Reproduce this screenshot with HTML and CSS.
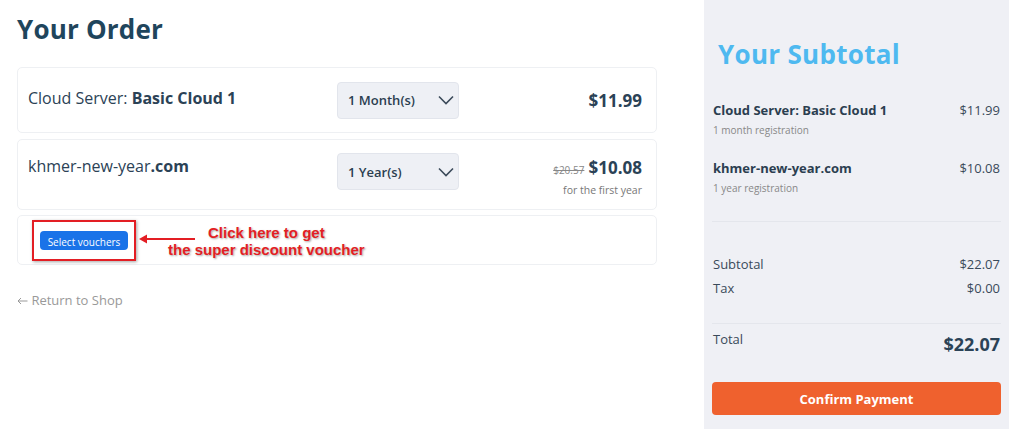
FILE: index.html
```html
<!DOCTYPE html>
<html lang="en">
<head>
    <meta charset="UTF-8">
    <meta name="viewport" content="width=device-width, initial-scale=1.0">
    <title>Your Order</title>
    <link rel="stylesheet" href="styles.css">
</head>
<body>
    <div class="page">
        <div class="order">
            <h1>Your Order</h1>

            <div class="card item">
                <div class="name">Cloud Server: <b>Basic Cloud 1</b></div>
                <div class="select">1 Month(s)
                    <svg width="16" height="10" viewBox="0 0 16 10"><path d="M1 1.5 L8 8.5 L15 1.5" fill="none" stroke="#3b4a5a" stroke-width="1.6"/></svg>
                </div>
                <div class="price"><span class="now">$11.99</span></div>
            </div>

            <div class="card item item-tall">
                <div class="name">khmer-new-year<b>.com</b></div>
                <div class="select">1 Year(s)
                    <svg width="16" height="10" viewBox="0 0 16 10"><path d="M1 1.5 L8 8.5 L15 1.5" fill="none" stroke="#3b4a5a" stroke-width="1.6"/></svg>
                </div>
                <div class="price">
                    <div><s class="old">$20.57</s> <span class="now">$10.08</span></div>
                    <div class="note">for the first year</div>
                </div>
            </div>

            <div class="card voucher">
                <div class="highlight">
                    <button class="btn-voucher">Select vouchers</button>
                </div>
                <svg class="arrow" width="58" height="12" viewBox="0 0 58 12"><path d="M57 6 H6" stroke="#e31e24" stroke-width="2"/><path d="M1 6 L9 1.5 L9 10.5 Z" fill="#e31e24"/></svg>
                <div class="hint">Click here to get<br>the super discount voucher</div>
            </div>

            <a class="back" href="#"><svg width="11" height="8" viewBox="0 0 11 8"><path d="M10.5 4 H1 M4 1 L1 4 L4 7" fill="none" stroke="#999" stroke-width="1"/></svg> Return to Shop</a>
        </div>

        <aside class="summary">
            <h2>Your Subtotal</h2>
            <div class="lines">
                <div class="line">
                    <div>
                        <div class="line-name">Cloud Server: Basic Cloud 1</div>
                        <div class="line-sub">1 month registration</div>
                    </div>
                    <div class="line-price">$11.99</div>
                </div>
                <div class="line">
                    <div>
                        <div class="line-name">khmer-new-year.com</div>
                        <div class="line-sub">1 year registration</div>
                    </div>
                    <div class="line-price">$10.08</div>
                </div>
            </div>
            <div class="totals">
                <div class="row"><span>Subtotal</span><span>$22.07</span></div>
                <div class="row"><span>Tax</span><span>$0.00</span></div>
            </div>
            <div class="grand">
                <span>Total</span><span class="grand-price">$22.07</span>
            </div>
            <button class="btn-confirm">Confirm Payment</button>
        </aside>
    </div>
</body>
</html>
```

FILE: styles.css
```css
body {
    margin: 0;
    font-family: "Open Sans", "Noto Sans", sans-serif;
    color: #2b4256;
    background: #fff;
}
.page {
    display: flex;
    height: 429px;
}
.order {
    width: 640px;
    padding: 0 0 0 17px;
}
h1 {
    margin: 11px 0 20px;
    font-size: 26px;
    font-weight: 700;
    color: #1f455c;
    letter-spacing: 0.2px;
}
.card {
    border: 1px solid #eef0f3;
    border-radius: 5px;
    margin-bottom: 5px;
}
.item {
    display: flex;
    align-items: center;
    height: 64px;
    padding: 0 14px 0 10px;
}
.item-tall {
    height: 69px;
    margin-top: 6px;
    align-items: flex-start;
}
.item-tall .name {
    margin-top: 15px;
}
.item-tall .select {
    margin-top: 13px;
}
.item-tall .price {
    margin-top: 16px;
}
.name {
    width: 309px;
    font-size: 16px;
    color: #2b4256;
    margin-top: -4px;
}
.name b {
    font-weight: 700;
}
.select {
    width: 122px;
    height: 37px;
    box-sizing: border-box;
    background: #eef0f5;
    border: 1px solid #e2e5ec;
    border-radius: 4px;
    display: flex;
    align-items: center;
    justify-content: space-between;
    padding: 0 4px 0 10px;
    font-size: 13px;
    font-weight: 600;
    color: #2b3e50;
}
.price {
    flex: 1;
    text-align: right;
}
.now {
    font-size: 17px;
    font-weight: 700;
    color: #2b4256;
}
.old {
    font-size: 10px;
    color: #888;
}
.note {
    font-size: 10.5px;
    color: #777;
    margin-top: 4px;
}
.voucher {
    display: flex;
    align-items: center;
    height: 48px;
    padding-left: 14px;
}
.highlight {
    border: 2px solid #e31e24;
    padding: 7px 6px 8px 6px;
    box-shadow: 1px 1px 3px rgba(0, 0, 0, 0.35);
}
.btn-voucher {
    background: #1a73e8;
    color: #fff;
    border: none;
    border-radius: 4px;
    font-family: inherit;
    font-size: 10px;
    padding: 4px 6px;
    width: 88px;
    height: 19px;
    cursor: pointer;
}
.arrow {
    margin-left: 2px;
    margin-top: -2px;
}
.hint {
    color: #e31e24;
    font-family: "Liberation Sans", Arial, sans-serif;
    font-size: 15px;
    font-weight: 700;
    text-align: center;
    line-height: 17px;
    text-shadow: 1px 1px 2px rgba(0, 0, 0, 0.35);
    margin-left: -28px;
    margin-top: 2px;
}
.back {
    display: block;
    margin-top: 26px;
    font-size: 13px;
    color: #999;
    text-decoration: none;
}
.summary {
    margin-left: 47px;
    width: 305px;
    background: #eff0f5;
    padding: 0 8px;
    box-sizing: border-box;
}
h2 {
    margin: 36px 0 29px 6px;
    font-size: 26px;
    font-weight: 700;
    color: #4eb9f0;
    letter-spacing: 0.3px;
}
.lines {
    border-bottom: 1px solid #e4e6ec;
    padding-bottom: 26px;
}
.line {
    display: flex;
    justify-content: space-between;
    padding: 0 1px;
    margin-bottom: 22px;
}
.line:last-child {
    margin-bottom: 0;
}
.line-name {
    font-size: 13px;
    font-weight: 700;
    color: #2b3e50;
}
.line-sub {
    font-size: 10px;
    color: #888;
    margin-top: 4px;
}
.line-price {
    font-size: 13px;
    color: #3a4a5a;
}
.totals {
    padding: 33px 1px 20px;
    border-bottom: 1px solid #e4e6ec;
}
.row {
    display: flex;
    justify-content: space-between;
    font-size: 13px;
    color: #3a4a5a;
    margin-bottom: 6px;
}
.grand {
    display: flex;
    justify-content: space-between;
    align-items: flex-start;
    padding: 6px 1px 0;
    font-size: 13px;
    color: #3a4a5a;
}
.grand-price {
    font-size: 18px;
    font-weight: 700;
    color: #2b4256;
    margin-top: 2px;
}
.btn-confirm {
    display: block;
    width: 100%;
    height: 33px;
    margin-top: 26px;
    background: #ef612e;
    color: #fff;
    border: none;
    border-radius: 4px;
    font-family: inherit;
    font-size: 13px;
    font-weight: 700;
    cursor: pointer;
}
```
